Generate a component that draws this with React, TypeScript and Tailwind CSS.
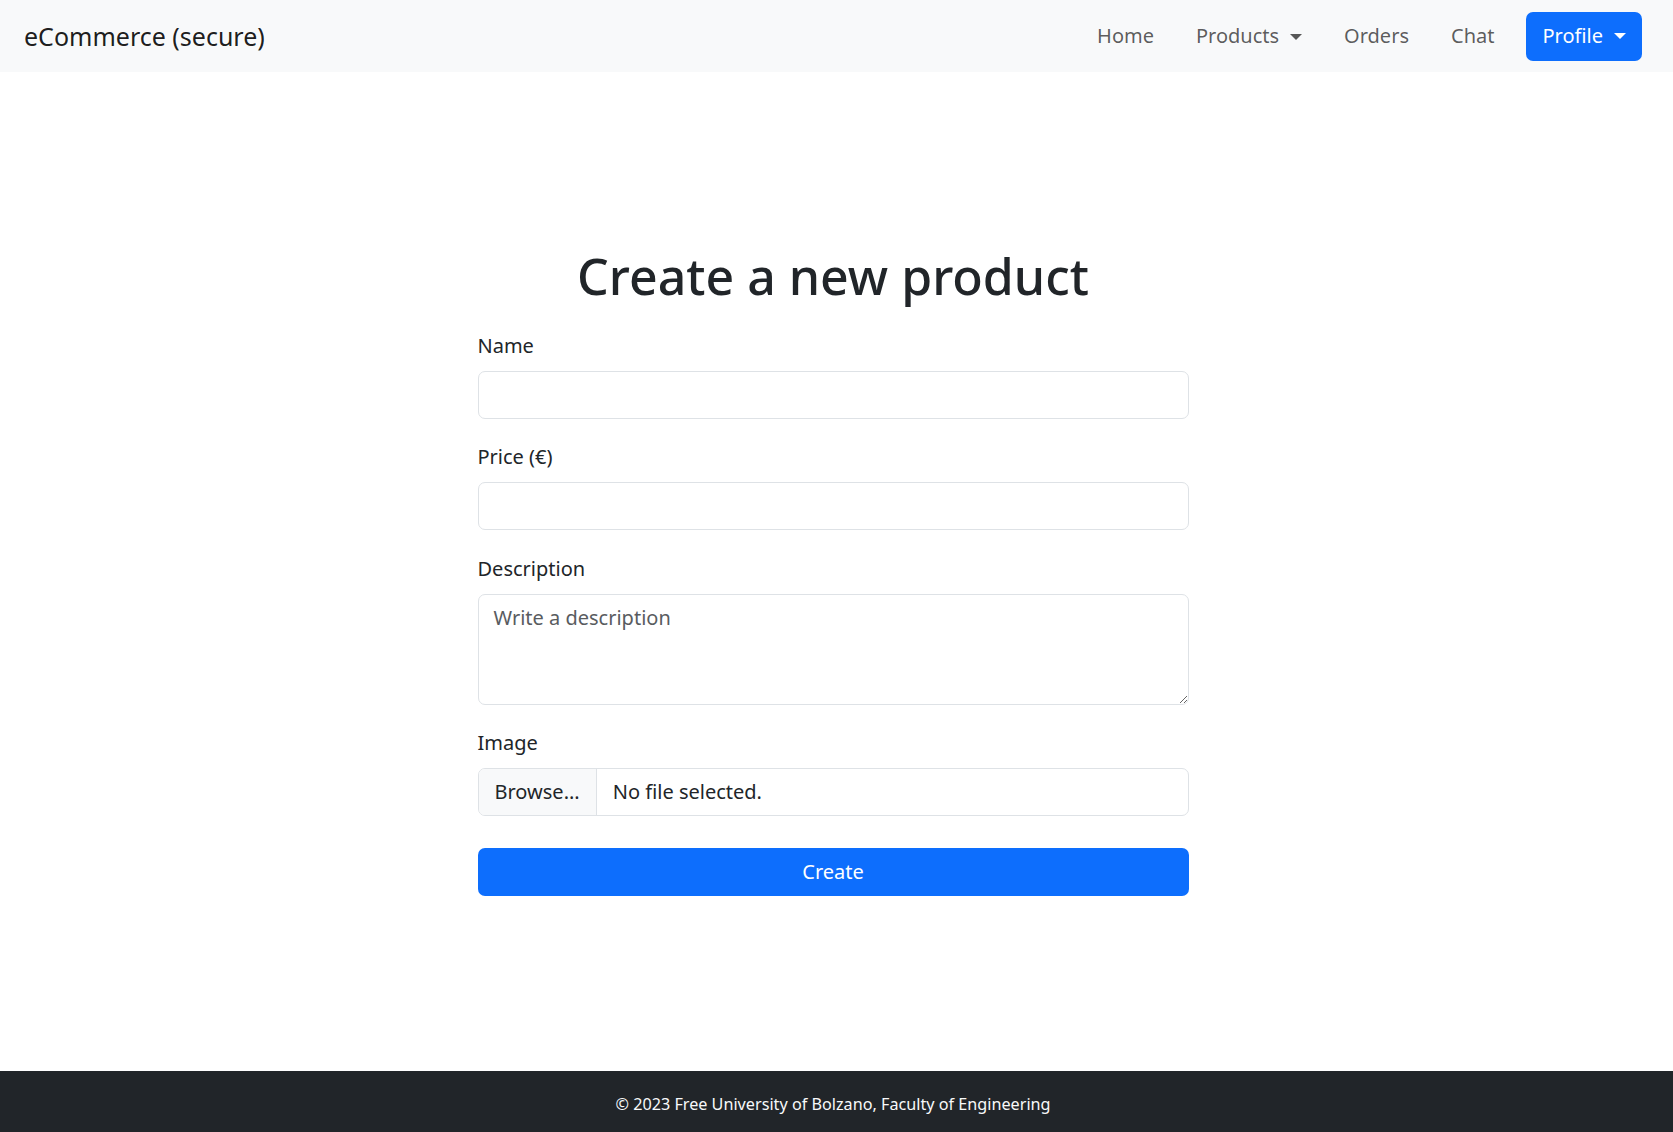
import React from 'react';

const navLinks = ['Home', 'Products', 'Orders', 'Chat'];

function Caret() {
  return <span className="ml-[11px] inline-block h-0 w-0 border-x-[6px] border-t-[6px] border-x-transparent border-t-current align-[3px]" />;
}

export default function App() {
  return (
    <div className="flex min-h-screen flex-col bg-white font-['Noto_Sans',sans-serif] text-[20px] text-[#212529]">
      <nav className="flex h-[72px] items-center justify-between bg-[#f8f9fa] pl-6 pr-[31px]">
        <a className="text-[25px] leading-[37px] text-black/90">eCommerce (secure)</a>
        <div className="flex items-center">
          {navLinks.map(link => (
            <a key={link} className="px-[21px] leading-[30px] text-black/65">
              {link}
              {link === 'Products' && <Caret />}
            </a>
          ))}
          <button className="ml-[11px] flex h-[49px] items-center rounded-[7px] bg-[#0d6efd] pl-[16px] pr-[16px] leading-[30px] text-white">
            Profile
            <Caret />
          </button>
        </div>
      </nav>

      <main className="flex-1 pr-[7px] pt-[174px]">
        <div className="mx-auto w-[711px]">
          <h1 className="mb-[25px] text-center text-[50px] font-medium leading-[60px]">Create a new product</h1>

          <div className="mb-[23px]">
            <label className="mb-[10px] block leading-[30px]">Name</label>
            <input type="text" className="block h-[48px] w-full rounded-[7px] border border-[#dee2e6] px-[15px] outline-none" />
          </div>

          <div className="mb-[24px]">
            <label className="mb-[10px] block leading-[30px]">Price (€)</label>
            <input type="text" className="block h-[48px] w-full rounded-[7px] border border-[#dee2e6] px-[15px] outline-none" />
          </div>

          <div className="mb-[23px]">
            <label className="mb-[10px] block leading-[30px]">Description</label>
            <textarea
              placeholder="Write a description"
              className="block h-[111px] w-full rounded-[7px] border border-[#dee2e6] px-[15px] py-[8px] leading-[30px] outline-none placeholder:text-[#595c5f]"
            />
          </div>

          <div className="mb-[32px]">
            <label className="mb-[10px] block leading-[30px]">Image</label>
            <div className="flex h-[48px] w-full overflow-hidden rounded-[7px] border border-[#dee2e6]">
              <span className="flex items-center border-r border-[#dee2e6] bg-[#f8f9fa] px-[16px]">Browse...</span>
              <span className="flex items-center px-[16px]">No file selected.</span>
            </div>
          </div>

          <button className="h-[48px] w-full rounded-[7px] bg-[#0d6efd] text-white">Create</button>
        </div>
      </main>

      <footer className="h-[61px] bg-[#212529] pr-[7px] pt-[20px] text-center text-[16.2px] leading-[26px] text-[#f8f9fa]">
        © 2023 Free University of Bolzano, Faculty of Engineering
      </footer>
    </div>
  );
}
